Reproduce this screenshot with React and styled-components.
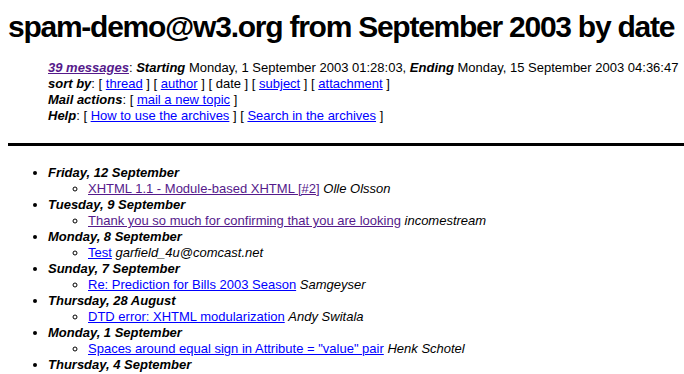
import React from 'react';
import styled, { createGlobalStyle } from 'styled-components';

const GlobalStyle = createGlobalStyle`
  body {
    margin: 8px 0 8px 8px;
    background: #ffffff;
    color: #000000;
    font-family: "Liberation Sans", Arial, sans-serif;
    font-size: 13px;
    line-height: 16px;
  }
  a {
    color: #0000ff;
  }
`;

const Title = styled.h1`
  margin: 0;
  font-size: 30px;
  line-height: 37px;
  letter-spacing: -1.25px;
  font-weight: bold;
  white-space: nowrap;
`;

const Info = styled.div`
  margin: 15px 0 0 40px;
`;

const InfoLine = styled.p`
  margin: 0;
  white-space: nowrap;
`;

const Label = styled.b`
  font-style: italic;
`;

const Link = styled.a`
  color: ${(p) => (p.$visited ? '#551a8b' : '#0000ff')};
`;

const Rule = styled.hr`
  margin: 19px 0 19px 0;
  border: 0;
  height: 3px;
  background: #000000;
`;

const DayList = styled.ul`
  margin: 0;
  padding-left: 40px;
  list-style: disc;
`;

const Day = styled.li`
  font-weight: bold;
  font-style: italic;
`;

const MessageList = styled.ul`
  margin: 0;
  padding-left: 40px;
  list-style: circle;
  font-weight: normal;
  font-style: normal;
`;

const Author = styled.i``;

const days = [
  { day: 'Friday, 12 September', subject: 'XHTML 1.1 - Module-based XHTML [#2]', author: 'Olle Olsson', visited: true },
  { day: 'Tuesday, 9 September', subject: 'Thank you so much for confirming that you are looking', author: 'incomestream', visited: true },
  { day: 'Monday, 8 September', subject: 'Test', author: 'garfield_4u@comcast.net' },
  { day: 'Sunday, 7 September', subject: 'Re: Prediction for Bills 2003 Season', author: 'Samgeyser' },
  { day: 'Thursday, 28 August', subject: 'DTD error: XHTML modularization', author: 'Andy Switala' },
  { day: 'Monday, 1 September', subject: 'Spaces around equal sign in Attribute = "value" pair', author: 'Henk Schotel' },
  { day: 'Thursday, 4 September' },
];

export default function App() {
  return (
    <>
      <GlobalStyle />
      <Title>spam-demo@w3.org from September 2003 by date</Title>
      <Info>
        <InfoLine>
          <Label><Link href="#" $visited>39 messages</Link></Label>: <Label>Starting</Label> Monday, 1 September 2003 01:28:03, <Label>Ending</Label> Monday, 15 September 2003 04:36:47
        </InfoLine>
        <InfoLine>
          <Label>sort by</Label>: [ <Link href="#">thread</Link> ] [ <Link href="#">author</Link> ] [ date ] [ <Link href="#">subject</Link> ] [ <Link href="#">attachment</Link> ]
        </InfoLine>
        <InfoLine>
          <Label>Mail actions</Label>: [ <Link href="#">mail a new topic</Link> ]
        </InfoLine>
        <InfoLine>
          <Label>Help</Label>: [ <Link href="#">How to use the archives</Link> ] [ <Link href="#">Search in the archives</Link> ]
        </InfoLine>
      </Info>
      <Rule />
      <DayList>
        {days.map((d) => (
          <Day key={d.day}>
            {d.day}
            {d.subject && (
              <MessageList>
                <li>
                  <Link href="#" $visited={d.visited}>{d.subject}</Link> <Author>{d.author}</Author>
                </li>
              </MessageList>
            )}
          </Day>
        ))}
      </DayList>
    </>
  );
}
